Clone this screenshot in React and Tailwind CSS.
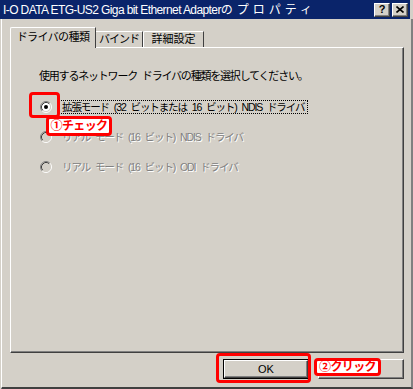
import React from "react";

const face = "font-['Liberation_Sans','Noto_Sans_CJK_JP',sans-serif]";

const Radio = ({ checked, disabled }) => (
  <svg width="12" height="12" viewBox="0 0 12 12" className="shrink-0">
    <circle cx="6" cy="6" r="4.5" fill={disabled ? "#d4d0c8" : "#ffffff"} />
    <path d="M2.11 9.89 A5.5 5.5 0 0 1 9.89 2.11" fill="none" stroke="#808080" strokeWidth="1" />
    <path d="M9.89 2.11 A5.5 5.5 0 0 1 2.11 9.89" fill="none" stroke="#ffffff" strokeWidth="1" />
    <path d="M2.82 9.18 A4.5 4.5 0 0 1 9.18 2.82" fill="none" stroke="#404040" strokeWidth="1" />
    <path d="M9.18 2.82 A4.5 4.5 0 0 1 2.82 9.18" fill="none" stroke="#d4d0c8" strokeWidth="1" />
    {checked && <circle cx="6" cy="6" r="2" fill="#000" />}
  </svg>
);

const CaptionButton = ({ children }) => (
  <div className="w-[16px] h-[14px] bg-[#d4d0c8] border-t border-l border-white border-r border-b border-r-[#404040] border-b-[#404040] shadow-[inset_-1px_-1px_#808080] flex items-center justify-center text-[11px] font-bold leading-none text-black">
    {children}
  </div>
);

export default function App() {
  return (
    <div className={`relative w-[413px] h-[389px] bg-[#d4d0c8] flex flex-col ${face}`}>
      {/* title bar */}
      <div className="w-[410px] h-[19px] bg-[#0a246a] flex items-center justify-between pl-[3px] pr-[2px]">
        <span className="text-white text-[12px] leading-none tracking-[-0.6px] whitespace-nowrap">
          I-O DATA ETG-US2 Giga bit Ethernet Adapter
          <span className="tracking-[4px]">のプロパティ</span>
        </span>
        <div className="flex gap-[2px]">
          <CaptionButton>?</CaptionButton>
          <CaptionButton>
            <svg width="8" height="7" viewBox="0 0 8 7">
              <path d="M0.5 0.5 L7.5 6.5 M7.5 0.5 L0.5 6.5" stroke="#000" strokeWidth="1.6" />
            </svg>
          </CaptionButton>
        </div>
      </div>

      {/* body */}
      <div className="flex-1 ml-px border-l border-white border-r-2 border-r-[#808080] border-b-2 border-b-[#404040] flex flex-col">
        {/* tabs */}
        <div className="flex items-end h-[20px] mt-[8px] pl-[8px] text-[11px] text-black leading-none">
          <div className="relative z-10 w-[86px] h-[21px] -mb-px bg-[#d4d0c8] border-l border-t border-white border-r border-r-[#404040] rounded-tl-[2px] flex items-start justify-center pt-[4px] tracking-[-0.6px]">
            ドライバの種類
          </div>
          <div className="w-[47px] h-[16px] border-t border-white border-r border-r-[#404040] flex items-center justify-center tracking-[-1px]">
            バインド
          </div>
          <div className="w-[61px] h-[16px] border-l border-t border-white border-r border-r-[#404040] rounded-tl-[2px] flex items-center justify-center">
            詳細設定
          </div>
        </div>

        {/* panel */}
        <div className="ml-[8px] w-[394px] h-[306px] border-l border-t border-white border-r border-b border-r-[#404040] border-b-[#404040] shadow-[inset_-1px_-1px_#808080] flex flex-col pl-[28px] pt-[22px] text-[11px] leading-[12px]">
          <p className="text-black tracking-[-1.2px] [word-spacing:3px] whitespace-nowrap">
            使用するネットワーク ドライバの種類を選択してください。
          </p>
          <div className="mt-[18px] h-[14px] flex items-center">
            <span className="ml-px">
              <Radio checked />
            </span>
            <span className="ml-[6px] px-[3px] h-[14px] flex items-center border border-dotted border-black text-black text-[10.5px] tracking-[-1.1px] [word-spacing:3px] whitespace-pre">
              拡張モード (32 ビットまたは 16 ビット) NDIS ドライバ
            </span>
          </div>
          <div className="mt-[16px] h-[14px] flex items-center">
            <span className="ml-px">
              <Radio disabled />
            </span>
            <span className="ml-[10px] text-[#808080] text-[10.5px] [text-shadow:1px_1px_0_#fff] tracking-[-1.1px] [word-spacing:3px] whitespace-pre">
              リアル モード (16 ビット) NDIS ドライバ
            </span>
          </div>
          <div className="mt-[16px] h-[14px] flex items-center">
            <span className="ml-px">
              <Radio disabled />
            </span>
            <span className="ml-[10px] text-[#808080] text-[10.5px] [text-shadow:1px_1px_0_#fff] tracking-[-1.1px] [word-spacing:3px] whitespace-pre">
              リアル モード (16 ビット) ODI ドライバ
            </span>
          </div>
        </div>

        {/* buttons */}
        <div className="flex justify-end gap-[9px] mt-[6px] pr-[7px] text-[11px] text-black leading-none">
          <div className="w-[86px] h-[20px] border border-black flex">
            <div className="flex-1 border-t border-l border-white border-r border-b border-r-[#404040] border-b-[#404040] shadow-[inset_-1px_-1px_#808080] flex items-center justify-center">
              OK
            </div>
          </div>
          <div className="w-[86px] h-[20px] border-t border-l border-white border-r border-b border-r-[#404040] border-b-[#404040] shadow-[inset_-1px_-1px_#808080] flex items-center justify-center pr-[16px] tracking-[-0.5px]">
            キャンセル
          </div>
        </div>
      </div>

      {/* annotations */}
      <div className="absolute left-[29px] top-[92px] w-[31px] h-[26px] border-[3px] border-[#ff0000] rounded-[4px]" />
      <div className="absolute left-[46px] top-[116px] w-[66px] h-[20px] bg-white border-[3px] border-[#ff0000] rounded-[4px] flex items-center justify-center text-[#ff0000] text-[12px] font-bold leading-none tracking-[-0.6px] whitespace-nowrap">
        ①チェック
      </div>
      <div className="absolute left-[216px] top-[353px] w-[95px] h-[30px] border-[3px] border-[#ff0000] rounded-[4px]" />
      <div className="absolute left-[314px] top-[358px] w-[67px] h-[18px] bg-white border-[3px] border-[#ff0000] rounded-[4px] flex items-center justify-center text-[#ff0000] text-[12px] font-bold leading-none tracking-[-0.6px] whitespace-nowrap">
        ②クリック
      </div>
    </div>
  );
}
